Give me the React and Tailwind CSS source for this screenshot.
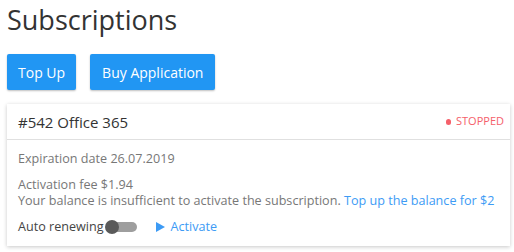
export default function App() {
    return (
        <div className="w-[514px] h-[252px] bg-white overflow-hidden font-['Open_Sans',sans-serif] text-[#333]">
            <div className="px-[7px] pt-[1px]">
                <h1 className="text-[27px] leading-[38px] text-[#333]">Subscriptions</h1>

                {/* actions */}
                <div className="flex gap-[14px] mt-[15px]">
                    <button className="h-[36px] px-[11px] bg-[#2196f3] text-white text-[14px] rounded-[2px] shadow-[0_1px_2px_rgba(0,0,0,0.25)]">
                        Top Up
                    </button>
                    <button className="h-[36px] px-[12px] bg-[#2196f3] text-white text-[14px] rounded-[2px] shadow-[0_1px_2px_rgba(0,0,0,0.25)]">
                        Buy Application
                    </button>
                </div>

                {/* card */}
                <div className="mt-[14px] w-[503px] bg-white shadow-[0_1px_4px_rgba(0,0,0,0.22)]">
                    <div className="h-[36px] flex items-center justify-between pl-[11px] pr-[6px] border-b border-[#e0e0e0]">
                        <span className="text-[15px] text-[#333] mt-[1px]">#542 Office 365</span>
                        <span className="flex items-center gap-[5px] text-[11px] text-[#f5606a]">
                            <span className="w-[5px] h-[6px] rounded-full bg-[#f5606a]" />
                            STOPPED
                        </span>
                    </div>
                    <div className="px-[11px] pt-[11px] pb-[10px] text-[12.6px] leading-[16px] text-[#777]">
                        <div>Expiration date 26.07.2019</div>
                        <div className="mt-[10px]">Activation fee $1.94</div>
                        <div>
                            Your balance is insufficient to activate the subscription.{' '}
                            <span className="text-[#3d9bf5]">Top up the balance for $2</span>
                        </div>
                        <div className="flex items-center mt-[9px] h-[18px]">
                            <span className="text-[#444]">Auto renewing</span>
                            <span className="relative ml-[1px] w-[32px] h-[12px]">
                                <span className="absolute left-[6px] top-[1px] w-[26px] h-[10px] rounded-full bg-[#9e9e9e]" />
                                <span className="absolute left-0 top-[-1px] w-[14px] h-[14px] rounded-full bg-[#5a5a5a]" />
                            </span>
                            <span className="ml-[19px] flex items-center gap-[6px] text-[#3d9bf5]">
                                <svg width="9" height="10" viewBox="0 0 9 10">
                                    <path d="M0 0 L9 5 L0 10 Z" fill="#3d9bf5" />
                                </svg>
                                Activate
                            </span>
                        </div>
                    </div>
                </div>
            </div>
        </div>
    )
}
